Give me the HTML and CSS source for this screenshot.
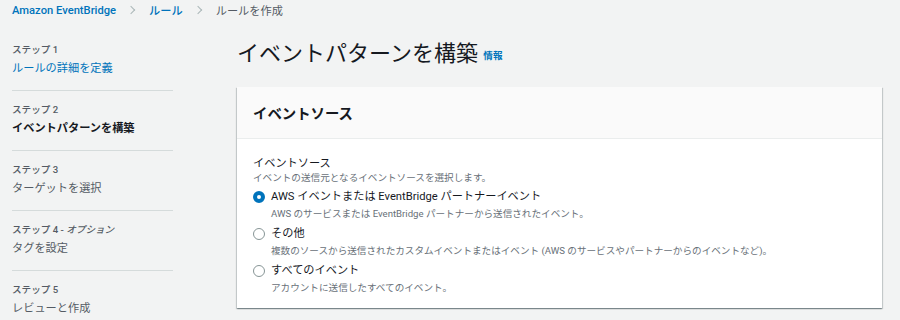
FILE: index.html
```html
<!DOCTYPE html>
<html lang="ja">
<head>
  <meta charset="UTF-8">
  <title>ルールを作成 | Amazon EventBridge</title>
  <link rel="stylesheet" href="styles.css">
</head>
<body>
  <nav class="breadcrumbs">
    <a href="#">Amazon EventBridge</a>
    <span class="sep"></span>
    <a href="#">ルール</a>
    <span class="sep"></span>
    <span class="current">ルールを作成</span>
  </nav>

  <div class="layout">
    <ul class="steps">
      <li class="step">
        <div class="step-label">ステップ 1</div>
        <a class="step-title link" href="#">ルールの詳細を定義</a>
      </li>
      <li class="step">
        <div class="step-label">ステップ 2</div>
        <div class="step-title active">イベントパターンを構築</div>
      </li>
      <li class="step">
        <div class="step-label">ステップ 3</div>
        <div class="step-title">ターゲットを選択</div>
      </li>
      <li class="step">
        <div class="step-label">ステップ 4 - <i>オプション</i></div>
        <div class="step-title">タグを設定</div>
      </li>
      <li class="step">
        <div class="step-label">ステップ 5</div>
        <div class="step-title">レビューと作成</div>
      </li>
    </ul>

    <main class="content">
      <h1>イベントパターンを構築 <a class="info" href="#">情報</a></h1>

      <section class="card">
        <header class="card-header">
          <h2>イベントソース</h2>
        </header>
        <div class="card-body">
          <div class="field-label">イベントソース</div>
          <div class="field-desc">イベントの送信元となるイベントソースを選択します。</div>

          <label class="radio">
            <span class="dot checked"></span>
            <span class="radio-text">
              <span class="radio-title">AWS イベントまたは EventBridge パートナーイベント</span>
              <span class="radio-desc">AWS のサービスまたは EventBridge パートナーから送信されたイベント。</span>
            </span>
          </label>

          <label class="radio">
            <span class="dot"></span>
            <span class="radio-text">
              <span class="radio-title">その他</span>
              <span class="radio-desc">複数のソースから送信されたカスタムイベントまたはイベント (AWS のサービスやパートナーからのイベントなど)。</span>
            </span>
          </label>

          <label class="radio">
            <span class="dot"></span>
            <span class="radio-text">
              <span class="radio-title">すべてのイベント</span>
              <span class="radio-desc">アカウントに送信したすべてのイベント。</span>
            </span>
          </label>
        </div>
      </section>
    </main>
  </div>
</body>
</html>
```

FILE: styles.css
```css
:root {
  --text: #16191f;
  --muted: #545b64;
  --subtle: #687078;
  --link: #0073bb;
  --divider: #d5dbdb;
  --bg: #f2f3f3;
}

html, body {
  margin: 0;
  padding: 0;
}

body {
  background: var(--bg);
  color: var(--text);
  font-family: Roboto, "Noto Sans CJK JP", sans-serif;
  font-size: 11.2px;
}

a {
  color: var(--link);
  text-decoration: none;
}

.breadcrumbs {
  display: flex;
  align-items: center;
  gap: 10px;
  height: 20px;
  padding: 0 12px;
  font-size: 11.2px;
}

.breadcrumbs a {
  font-weight: 500;
}

.breadcrumbs .current {
  color: var(--muted);
}

.sep {
  width: 5px;
  height: 5px;
  border-top: 1.2px solid #aab7b8;
  border-right: 1.2px solid #aab7b8;
  transform: rotate(45deg);
  margin: 0 5px 0 2px;
}

.layout {
  display: flex;
  gap: 64px;
  padding: 18px 12px 0;
}

.steps {
  list-style: none;
  margin: 0;
  padding: 3px 0 0;
  width: 161px;
  flex-shrink: 0;
}

.step {
  padding: 0 0 12px;
  margin-bottom: 10px;
  border-bottom: 1px solid var(--divider);
  height: 37px;
}

.step:last-child {
  border-bottom: none;
}

.step-label {
  font-size: 9.6px;
  color: var(--muted);
  line-height: 18px;
  font-weight: 500;
}

.step-title {
  display: block;
  font-size: 11.2px;
  line-height: 19px;
  color: var(--muted);
}

.step-title.link {
  color: var(--link);
}

.step-title.active {
  color: var(--text);
  font-weight: 700;
}

.content {
  flex: 1;
  max-width: 645px;
}

h1 {
  margin: 0 0 15px;
  font-size: 22px;
  font-weight: 400;
  line-height: 32px;
}

.info {
  font-size: 9.6px;
  font-weight: 700;
  vertical-align: 2px;
}

.card {
  background: white;
  box-shadow: 0 1px 1px 0 rgba(0, 28, 36, 0.3), 1px 1px 1px 0 rgba(0, 28, 36, 0.15), -1px 1px 1px 0 rgba(0, 28, 36, 0.15);
}

.card-header {
  background: #fafafa;
  border-bottom: 1px solid #eaeded;
  height: 51px;
  display: flex;
  align-items: center;
  padding: 0 16px;
}

h2 {
  margin: 0;
  font-size: 14.4px;
  font-weight: 700;
}

.card-body {
  padding: 18px 16px 13px;
}

.field-label {
  font-size: 11.2px;
  line-height: 14px;
}

.field-desc {
  font-size: 9.6px;
  color: var(--subtle);
  line-height: 14px;
  margin-bottom: 3px;
}

.radio {
  display: flex;
  gap: 6px;
  margin-bottom: 4px;
}

.radio:last-child {
  margin-bottom: 0;
}

.dot {
  width: 12px;
  height: 12px;
  box-sizing: border-box;
  border: 1px solid #879596;
  border-radius: 50%;
  background: white;
  margin-top: 3px;
  flex-shrink: 0;
}

.dot.checked {
  border: 4px solid var(--link);
}

.radio-text {
  display: flex;
  flex-direction: column;
}

.radio-title {
  font-size: 11.2px;
  line-height: 18px;
}

.radio-desc {
  font-size: 9.6px;
  color: var(--subtle);
  line-height: 15px;
}
```
